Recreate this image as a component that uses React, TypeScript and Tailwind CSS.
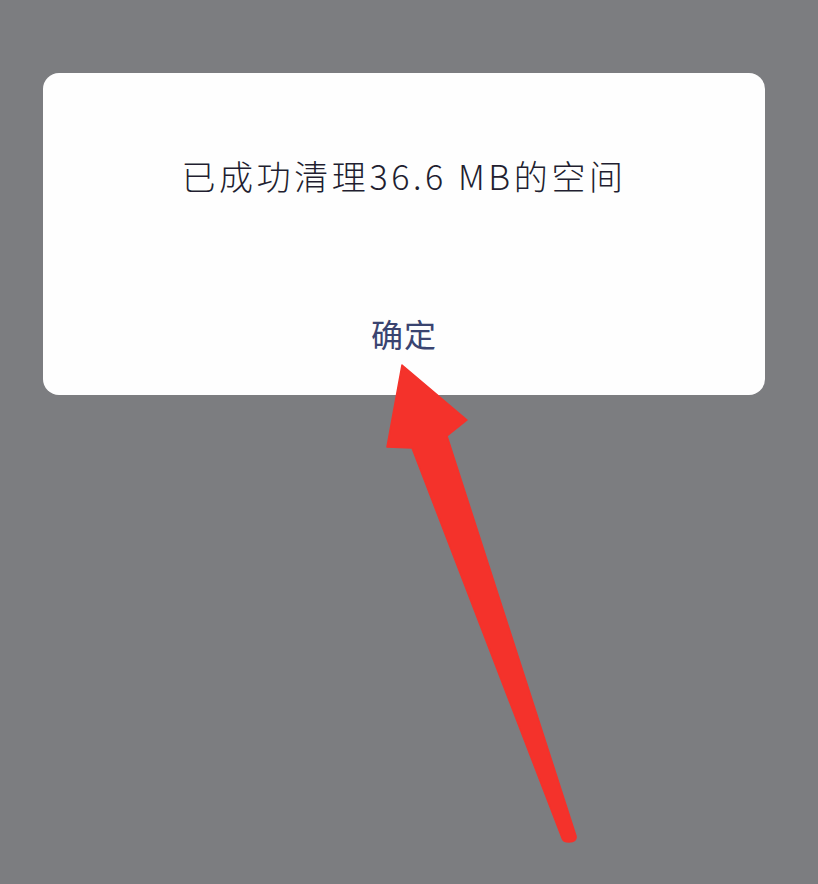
import React from "react";

const CJK = "'Noto Sans CJK SC', 'Noto Sans', sans-serif";

const Arrow: React.FC = () => {
  return (
    <svg
      className="absolute left-0 top-0 pointer-events-none"
      width={818}
      height={884}
      viewBox="0 0 818 884"
    >
      <path
        d="M402 365 L467 420 L447 436 L576 836 Q577 842 569 842 Q563 842 562 838 L412 448 L387 447 Z"
        fill="#f4322b"
        stroke="#f4322b"
        strokeWidth={1.5}
        strokeLinejoin="round"
      />
    </svg>
  );
};

export default function App() {
  return (
    <div className="relative w-[818px] h-[884px] overflow-hidden bg-[#7c7d80]">
      <div className="ml-[43px] mt-[73px] w-[722px] h-[322px] rounded-[16px] bg-[#fefefe] flex flex-col items-center">
        <div
          className="mt-[82px] text-[34px] leading-[41px] tracking-[3.6px] font-light text-[#221e30]"
          style={{ fontFamily: CJK }}
        >
          已成功清理36.6 MB的空间
        </div>
        <button
          className="mt-[118px] text-[32px] leading-[38px] tracking-[1px] text-[#3a4470]"
          style={{ fontFamily: CJK }}
        >
          确定
        </button>
      </div>
      <Arrow />
    </div>
  );
}
